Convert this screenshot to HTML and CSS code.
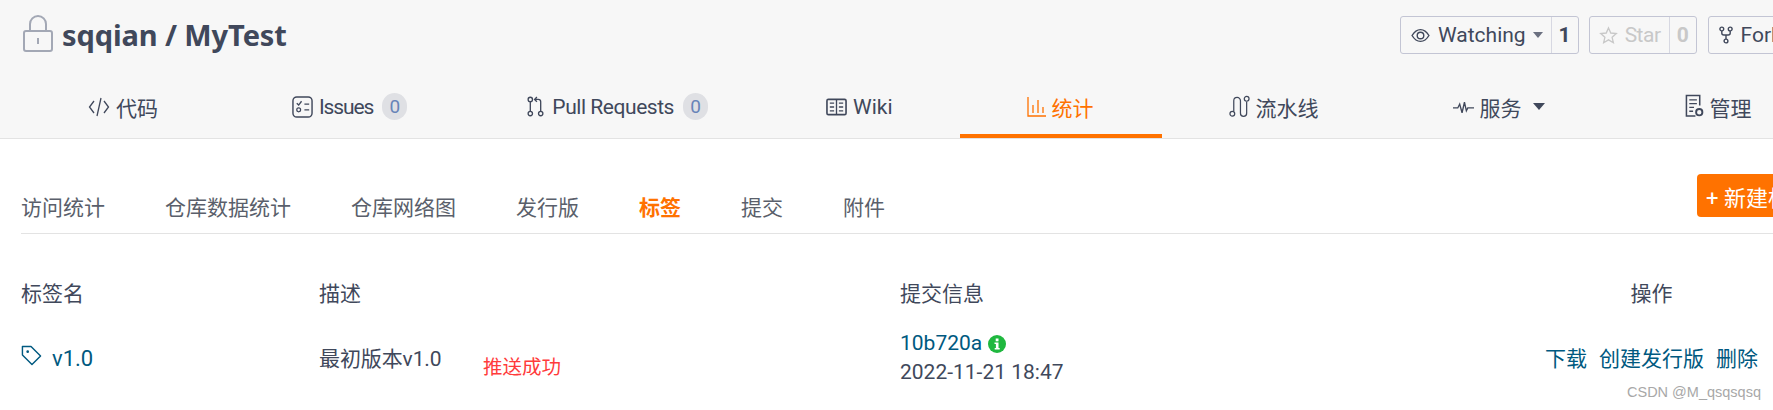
FILE: index.html
```html
<!DOCTYPE html>
<html lang="zh">
<head>
<meta charset="utf-8">
<title>sqqian / MyTest</title>
<link rel="stylesheet" href="styles.css">
</head>
<body>
<header class="head">
  <div class="repo-row">
    <div class="repo-title">
      <svg class="lock" viewBox="0 0 30 37" width="30" height="37"><path d="M7 17V9a8 8 0 0 1 16 0v8" fill="none" stroke="#a3a8b5" stroke-width="2"/><rect x="1" y="16" width="28" height="20" rx="2" fill="none" stroke="#a3a8b5" stroke-width="2"/><rect x="14" y="23" width="2" height="6" fill="#a3a8b5"/></svg>
      <span>sqqian / MyTest</span>
    </div>
    <div class="repo-actions">
      <div class="btn-group watch">
        <span class="btn-main"><svg viewBox="0 0 20 16" width="19" height="15"><path d="M1 8c2.500-4.200 5.500-6.300 9-6.300s6.500 2.100 9 6.300c-2.500 4.200-5.500 6.300-9 6.300S3.500 12.200 1 8z" fill="none" stroke="#40485b" stroke-width="1.500"/><circle cx="10" cy="8" r="3.500" fill="none" stroke="#40485b" stroke-width="1.500"/></svg>Watching<i class="caret small"></i></span>
        <span class="btn-count">1</span>
      </div>
      <div class="btn-group disabled">
        <span class="btn-main"><svg viewBox="0 0 20 20" width="19" height="19"><path d="M10 2l2.400 5.400 5.800.6-4.400 3.900 1.300 5.700L10 14.600l-5.100 3 1.300-5.700L1.800 8l5.800-.6z" fill="none" stroke="#c8c8c8" stroke-width="1.400"/></svg>Star</span>
        <span class="btn-count">0</span>
      </div>
      <div class="btn-group fork">
        <span class="btn-main"><svg viewBox="0 0 14 18" width="14" height="18"><circle cx="2.800" cy="3" r="1.900" fill="none" stroke="#40485b" stroke-width="1.400"/><circle cx="11.200" cy="3" r="1.900" fill="none" stroke="#40485b" stroke-width="1.400"/><circle cx="7" cy="15" r="1.900" fill="none" stroke="#40485b" stroke-width="1.400"/><path d="M2.800 5v2c0 1.500 1 2 2 2h4.400c1 0 2-.5 2-2V5M7 9v4" fill="none" stroke="#40485b" stroke-width="1.400"/></svg>Fork</span>
      </div>
    </div>
  </div>
  <nav class="tabs">
    <a class="tab"><svg viewBox="0 0 22 20" width="22" height="20"><path d="M6 4L1.500 10 6 16M16 4l4.500 6-4.500 6M13 1L9 19" fill="none" stroke="#40485b" stroke-width="1.300"/></svg>代码</a>
    <a class="tab has-badge issues"><svg viewBox="0 0 22 24" width="21" height="24"><rect x="1" y="1.500" width="20" height="21" rx="4" fill="none" stroke="#40485b" stroke-width="1.500"/><path d="M5 8l2 2 3-4M13 9h5M13 15h5" fill="none" stroke="#40485b" stroke-width="1.400"/><circle cx="7" cy="15" r="2" fill="none" stroke="#40485b" stroke-width="1.300"/></svg><span class="tight-1">Issues</span><span class="badge">0</span></a>
    <a class="tab has-badge pulls"><svg viewBox="0 0 18 22" width="17" height="21"><circle cx="3.500" cy="3.500" r="2.300" fill="none" stroke="#40485b" stroke-width="1.400"/><circle cx="3.500" cy="18.500" r="2.300" fill="none" stroke="#40485b" stroke-width="1.400"/><circle cx="14.500" cy="18.500" r="2.300" fill="none" stroke="#40485b" stroke-width="1.400"/><path d="M3.500 6v10M14.500 16V6c0-1.500-1-2.500-2.500-2.500H8M10.500 1L8 3.500 10.500 6" fill="none" stroke="#40485b" stroke-width="1.400"/></svg><span class="tight-2">Pull Requests</span><span class="badge">0</span></a>
    <a class="tab"><svg viewBox="0 0 22 18" width="21" height="18"><rect x="1" y="1" width="20" height="16" rx="1.500" fill="none" stroke="#40485b" stroke-width="1.700"/><path d="M11 1v16M4 5h4.500M4 9h4.500M4 13h4.500M13.500 5H18M13.500 9H18M13.500 13H18" fill="none" stroke="#40485b" stroke-width="1.400"/></svg>Wiki</a>
    <a class="tab active"><svg viewBox="0 0 19 20" width="19" height="20"><path d="M1 0v19h18M6 8v8M11 3v13M16 10v6" fill="none" stroke="#ff7200" stroke-width="1.300"/></svg>统计</a>
    <a class="tab"><svg viewBox="0 0 22 24" width="21" height="23"><circle cx="3.500" cy="19.500" r="2.500" fill="none" stroke="#40485b" stroke-width="1.300"/><circle cx="18.500" cy="4" r="2.500" fill="none" stroke="#40485b" stroke-width="1.300"/><path d="M5 17V6a3.500 3.500 0 0 1 7 0v13a3.200 3.200 0 0 0 6.500 0V7" fill="none" stroke="#40485b" stroke-width="1.300"/></svg>流水线</a>
    <a class="tab service"><svg viewBox="0 0 22 16" width="21" height="16"><path d="M0 9h5l2-4 2.500 9L12 3l2 9 1.500-3H22" fill="none" stroke="#40485b" stroke-width="1.400"/></svg>服务<i class="caret"></i></a>
    <a class="tab"><svg viewBox="0 0 20 26" width="19" height="25"><path d="M11 23H1.500V1.500h14V12" fill="none" stroke="#40485b" stroke-width="1.600"/><path d="M4.500 6h8M4.500 10h8M4.500 14h5M4.500 18h4" fill="none" stroke="#40485b" stroke-width="1.400"/><circle cx="15" cy="19" r="3.300" fill="none" stroke="#40485b" stroke-width="2"/></svg>管理</a>
  </nav>
</header>

<main class="content">
  <div class="subnav">
    <a>访问统计</a>
    <a>仓库数据统计</a>
    <a>仓库网络图</a>
    <a>发行版</a>
    <a class="current">标签</a>
    <a>提交</a>
    <a>附件</a>
    <button class="new-btn">+ 新建标签</button>
  </div>
  <div class="table">
    <div class="th">标签名</div>
    <div class="th">描述</div>
    <div class="th">提交信息</div>
    <div class="th center">操作</div>
    <div class="td tag-name"><svg viewBox="0 0 22 22" width="21" height="21"><path d="M1.500 1.500h9l10 10-9 9-10-10z" fill="none" stroke="#005980" stroke-width="1.500" stroke-linejoin="round"/><circle cx="7" cy="7" r="1.400" fill="#005980"/></svg><a>v1.0</a></div>
    <div class="td desc">最初版本v1.0</div>
    <div class="td commit">
      <div class="hash"><a>10b720a</a><svg viewBox="0 0 18 18" width="18" height="18"><circle cx="9" cy="9" r="9" fill="#1fb83f"/><rect x="7.700" y="3.500" width="2.800" height="2.800" fill="#fff"/><path d="M6.500 7.500h4v5.500h1.200v1.500h-5V13h1.200V9H6.500z" fill="#fff"/></svg></div>
      <div class="date">2022-11-21 18:47</div>
    </div>
    <div class="td ops"><a>下载</a><a>创建发行版</a><a>删除</a></div>
  </div>
  <span class="note">推送成功</span>
  <span class="mark">CSDN @M_qsqsqsq</span>
</main>
</body>
</html>
```
FILE: styles.css
```css
* { box-sizing: border-box; }
html, body { margin: 0; padding: 0; height: 410px; overflow: hidden; background: #fff; }
body {
  width: 1773px;
  position: relative;
  font-family: Roboto, "Noto Sans CJK SC", sans-serif;
  font-size: 21px;
  color: #40485b;
}
.head { height: 139px; background: #f7f7f7; border-bottom: 1px solid #e3e3e3; }
.repo-row { display: flex; justify-content: space-between; height: 72px; padding: 16px 0 0 23px; }
.repo-title { display: flex; align-items: center; height: 37px; gap: 9px; font-family: "Noto Sans", sans-serif; font-size: 29px; font-weight: 700; letter-spacing: -.1px; }
.lock { flex: none; margin-top: -2px; }
.repo-actions { display: flex; gap: 11px; width: 373px; flex: none; }
.btn-group { display: flex; height: 38px; border: 1px solid #c3c5d4; border-radius: 3px; font-size: 21px; flex: none; }
.btn-main { display: flex; align-items: center; gap: 8px; padding: 0 10px; white-space: nowrap; }
.watch .btn-main { padding-right: 8px; }
.btn-count { display: flex; align-items: center; justify-content: center; width: 27px; border-left: 1px solid #d7d8e2; font-weight: 700; }
.disabled { color: #c8c8c8; letter-spacing: -.5px; margin-left: -1px; }
.disabled .btn-main { gap: 7px; padding: 0 8px 0 9px; }
.fork { width: 120px; }
.caret { display: inline-block; width: 0; height: 0; border-left: 6px solid transparent; border-right: 6px solid transparent; border-top: 7px solid #40485b; margin-left: 5px; }
.caret.small { border-left-width: 5px; border-right-width: 5px; border-top-width: 6px; border-top-color: #6b7080; margin-left: -1px; }
.tabs { display: flex; height: 66px; padding-left: 21px; }
.tab { display: flex; align-items: center; gap: 6px; padding: 7px 67px 0; border-bottom: 4px solid transparent; white-space: nowrap; height: 66px; }
.tab.issues { padding-right: 53px; }
.tab.pulls { padding-right: 51px; gap: 8px; }
.tab.service { padding-right: 73px; }
.tab.active { color: #ff7200; border-bottom-color: #ff7200; padding: 7px 68px 0 67px; }
.tight-1 { letter-spacing: -1.100px; }
.tight-2 { letter-spacing: -.45px; }
.badge { display: inline-flex; align-items: center; justify-content: center; width: 25px; height: 27px; border-radius: 13px; background: #dfe0e4; color: #6884b8; font-size: 19px; margin-left: 3px; letter-spacing: 0; }
.pulls .badge { margin-left: 1px; }
.content { padding: 0 0 0 21px; }
.subnav { display: flex; align-items: center; height: 95px; padding-top: 39px; gap: 60px; border-bottom: 1px solid #e3e3e3; font-size: 21px; color: #5a5f6b; position: relative; }
.subnav .current { color: #ff7200; font-weight: 700; }
.new-btn { position: absolute; left: 1676px; top: 35px; width: 140px; height: 43px; border: 0; border-radius: 4px; background: #ff7200; color: #fff; font: inherit; font-size: 22px; text-align: left; padding: 0 0 0 9px; white-space: nowrap; overflow: hidden; }
.table { display: grid; grid-template-columns: 298px 581px 645px 213px; font-size: 21px; }
.th { height: 98px; padding-top: 44px; line-height: 32px; }
.center { text-align: center; }
.td { display: flex; }
.tag-name { align-items: center; gap: 10px; height: 50px; font-size: 22px; padding-top: 2px; }
.tag-name svg { margin-top: -6px; }
.tag-name a, .hash a, .ops a { color: #005980; }
.desc { height: 49px; align-items: center; padding-top: 1px; letter-spacing: -.1px; }
.commit { flex-direction: column; margin-top: -3px; line-height: 29px; }
.hash { display: flex; align-items: center; gap: 6px; height: 29px; }
.ops { height: 49px; align-items: center; gap: 12px; padding-top: 1px; }
.note { position: absolute; left: 483px; top: 351px; font-size: 19.500px; color: #ff3b3b; }
.mark { position: absolute; left: 1627px; top: 384px; font-size: 14.500px; color: #a8a8a8; font-family: "Liberation Sans", sans-serif; }
```
